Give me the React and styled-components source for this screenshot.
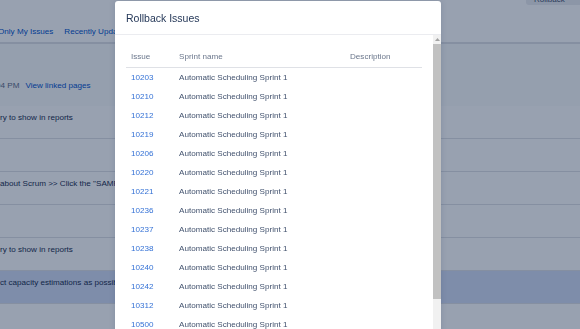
import React from 'react';
import styled, { createGlobalStyle } from 'styled-components';

const GlobalStyle = createGlobalStyle`
  html, body {
    margin: 0;
    padding: 0;
    width: 580px;
    height: 329px;
    overflow: hidden;
    background: #ffffff;
    font-family: "Liberation Sans", Arial, sans-serif;
  }
`;

// page behind the dialog
const Page = styled.div`
  display: flex;
  flex-direction: column;
  width: 580px;
  font-size: 8.1px;
  color: #172b4d;
`;

const TopBar = styled.div`
  display: flex;
  justify-content: flex-end;
  height: 20px;
  overflow: hidden;
`;

const TopButton = styled.div`
  margin-top: -11px;
  height: 16px;
  width: 54px;
  background: #ebecf0;
  border-radius: 3px 0 0 3px;
  color: #42526e;
  display: flex;
  align-items: flex-end;
  padding-left: 8px;
  box-sizing: border-box;
  font-size: 8px;
  line-height: 11px;
  white-space: nowrap;
  overflow: hidden;
`;

const Nav = styled.div`
  display: flex;
  gap: 11px;
  height: 22px;
  align-items: center;
  margin-left: -2px;
  border-bottom: 2px solid #dfe1e6;
`;

const NavTab = styled.span`
  color: #0052cc;
  white-space: nowrap;
`;

const InfoArea = styled.div`
  height: 62px;
  display: flex;
  align-items: flex-end;
  padding-bottom: 16px;
  box-sizing: border-box;
  gap: 6px;
  margin-left: -4px;
  background: #fafbfc;
`;

const Muted = styled.span`
  color: #5e6c84;
`;

const Link = styled.span`
  color: #0052cc;
`;

const Row = styled.div`
  height: 33px;
  box-sizing: border-box;
  border-bottom: 1px solid #dfe1e6;
  padding-top: 7px;
  line-height: 10px;
  white-space: nowrap;
  overflow: hidden;
  background: ${(p) => (p.selected ? '#d3ddf4' : '#ffffff')};
`;

const Blanket = styled.div`
  position: fixed;
  inset: 0;
  background: rgba(9, 30, 66, 0.42);
`;

// dialog
const Modal = styled.div`
  position: fixed;
  top: 1px;
  left: 115px;
  width: 326px;
  bottom: -20px;
  background: #ffffff;
  border-radius: 3px 3px 0 0;
  display: flex;
  flex-direction: column;
  box-shadow: 0 0 6px rgba(9, 30, 66, 0.15);
`;

const Header = styled.div`
  height: 33px;
  flex-shrink: 0;
  display: flex;
  align-items: center;
  padding: 0 11px;
  border-bottom: 1px solid #ebecf0;
`;

const Title = styled.h2`
  margin: 0;
  font-size: 10.5px;
  font-weight: 500;
  color: #253858;
  padding-top: 1px;
`;

const Body = styled.div`
  flex: 1;
  display: flex;
  min-height: 0;
`;

const Content = styled.div`
  flex: 1;
  padding: 11px 11px 0 11px;
  overflow: hidden;
`;

const Table = styled.table`
  width: 100%;
  border-collapse: collapse;
  table-layout: fixed;
  font-size: 8.1px;
`;

const Th = styled.th`
  box-sizing: border-box;
  text-align: left;
  font-weight: 400;
  color: #6b778c;
  height: 21px;
  padding: 0 0 0 5px;
  border-bottom: 1px solid #dfe1e6;
  width: ${(p) => (p.w ? `${p.w}px` : 'auto')};
  white-space: nowrap;
`;

const Td = styled.td`
  box-sizing: border-box;
  height: 19px;
  padding: 1px 0 0 5px;
  color: ${(p) => (p.link ? '#3572d6' : '#42526e')};
  white-space: nowrap;
`;

const Scrollbar = styled.div`
  width: 8px;
  display: flex;
  flex-direction: column;
  background: #f1f1f1;
`;

const ScrollUp = styled.div`
  height: 9px;
  display: flex;
  align-items: center;
  justify-content: center;
`;

const Thumb = styled.div`
  height: 255px;
  background: #c1c1c1;
`;

const issues = [
  '10203', '10210', '10212', '10219', '10206', '10220', '10221',
  '10236', '10237', '10238', '10240', '10242', '10312', '10500', '10501',
];

export default function App() {
  return (
    <>
      <GlobalStyle />
      <Page>
        <TopBar>
          <TopButton>Rollback</TopButton>
        </TopBar>
        <Nav>
          <NavTab>Only My Issues</NavTab>
          <NavTab>Recently Updated</NavTab>
        </Nav>
        <InfoArea>
          <Muted>04 PM</Muted>
          <Link>View linked pages</Link>
        </InfoArea>
        <Row>ry to show in reports</Row>
        <Row />
        <Row>about Scrum &gt;&gt; Click the "SAMPLE"</Row>
        <Row />
        <Row>ry to show in reports</Row>
        <Row selected>ct capacity estimations as possible</Row>
        <Row />
      </Page>
      <Blanket />
      <Modal>
        <Header>
          <Title>Rollback Issues</Title>
        </Header>
        <Body>
          <Content>
            <Table>
              <thead>
                <tr>
                  <Th w={48}>Issue</Th>
                  <Th w={171}>Sprint name</Th>
                  <Th>Description</Th>
                </tr>
              </thead>
              <tbody>
                {issues.map((id) => (
                  <tr key={id}>
                    <Td link>{id}</Td>
                    <Td>Automatic Scheduling Sprint 1</Td>
                    <Td />
                  </tr>
                ))}
              </tbody>
            </Table>
          </Content>
          <Scrollbar>
            <ScrollUp>
              <svg width="5" height="3" viewBox="0 0 5 3">
                <path d="M0 3 L2.5 0 L5 3 Z" fill="#a3a3a3" />
              </svg>
            </ScrollUp>
            <Thumb />
          </Scrollbar>
        </Body>
      </Modal>
    </>
  );
}
